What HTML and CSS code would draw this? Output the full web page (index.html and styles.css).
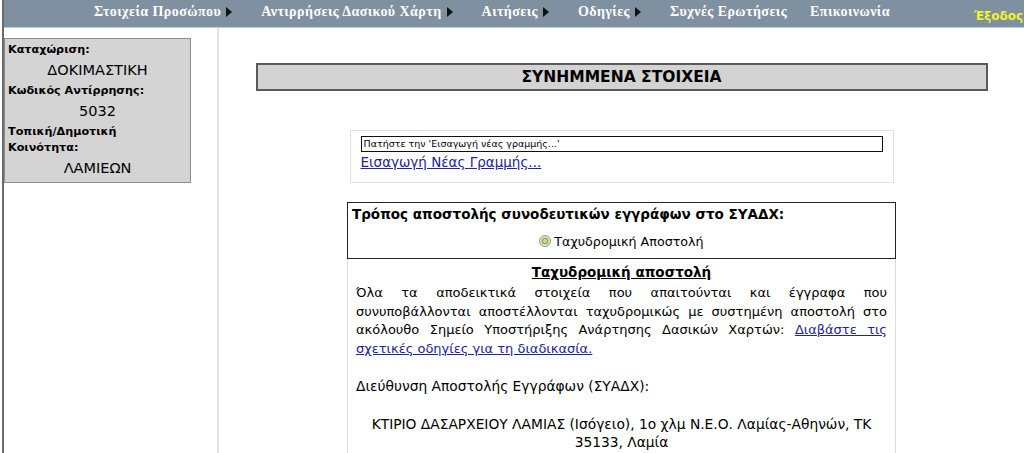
FILE: index.html
```html
<!DOCTYPE html>
<html lang="el">
<head>
<meta charset="utf-8">
<title>Συνημμένα Στοιχεία</title>
<link rel="stylesheet" href="styles.css">
</head>
<body>
<div class="page">
  <nav class="topnav">
    <a class="nav-item" href="#">Στοιχεία Προσώπου<span class="arrow"></span></a>
    <a class="nav-item" href="#">Αντιρρήσεις Δασικού Χάρτη<span class="arrow"></span></a>
    <a class="nav-item" href="#">Αιτήσεις<span class="arrow"></span></a>
    <a class="nav-item" href="#">Οδηγίες<span class="arrow"></span></a>
    <a class="nav-item" href="#">Συχνές Ερωτήσεις</a>
    <a class="nav-item" href="#">Επικοινωνία</a>
    <a class="nav-exit" href="#">Έξοδος</a>
  </nav>
  <div class="layout">
    <aside class="sidebar">
      <div class="infobox">
        <div class="info-label">Καταχώριση:</div>
        <div class="info-value">ΔΟΚΙΜΑΣΤΙΚΗ</div>
        <div class="info-label">Κωδικός Αντίρρησης:</div>
        <div class="info-value">5032</div>
        <div class="info-label">Τοπική/Δημοτική Κοινότητα:</div>
        <div class="info-value">ΛΑΜΙΕΩΝ</div>
      </div>
    </aside>
    <main class="main">
      <div class="title-box">ΣΥΝΗΜΜΕΝΑ ΣΤΟΙΧΕΙΑ</div>
      <div class="lines-box">
        <div class="hint-field">Πατήστε την 'Εισαγωγή νέας γραμμής...'</div>
        <a class="add-link" href="#">Εισαγωγή Νέας Γραμμής...</a>
      </div>
      <div class="method-box">
        <div class="method-title">Τρόπος αποστολής συνοδευτικών εγγράφων στο ΣΥΑΔΧ:</div>
        <div class="method-option">
          <svg class="radio" width="12" height="12" viewBox="0 0 12 12" aria-hidden="true">
            <circle cx="6" cy="6" r="5.5" fill="#e4ebdc" stroke="#8d9a86"/>
            <circle cx="6" cy="6" r="3.6" fill="#8fb25c"/>
            <circle cx="6" cy="6" r="2" fill="#c9dca8"/>
          </svg>Ταχυδρομική Αποστολή
        </div>
      </div>
      <div class="post-box">
        <div class="post-title">Ταχυδρομική αποστολή</div>
        <p class="post-text">Όλα τα αποδεικτικά στοιχεία που απαιτούνται και έγγραφα που συνυποβάλλονται αποστέλλονται ταχυδρομικώς με συστημένη αποστολή στο ακόλουθο Σημείο Υποστήριξης Ανάρτησης Δασικών Χαρτών: <a class="doc-link" href="#">Διαβάστε τις σχετικές οδηγίες για τη διαδικασία.</a></p>
        <p class="post-label">Διεύθυνση Αποστολής Εγγράφων (ΣΥΑΔΧ):</p>
        <p class="post-address">ΚΤΙΡΙΟ ΔΑΣΑΡΧΕΙΟΥ ΛΑΜΙΑΣ (Ισόγειο), 1ο χλμ Ν.Ε.Ο. Λαμίας-Αθηνών, ΤΚ 35133, Λαμία</p>
      </div>
    </main>
  </div>
</div>
</body>
</html>
```
FILE: styles.css
```css
html, body {
  margin: 0;
  padding: 0;
  background: #ffffff;
}
body {
  font-family: "DejaVu Sans", Verdana, sans-serif;
  color: #000;
  overflow: hidden;
}
.page {
  margin-left: 2px;
  border-left: 2px solid #6a6a6a;
  min-height: 453px;
}
.topnav {
  height: 27px;
  background: #7f90a0;
  display: flex;
  align-items: flex-start;
  padding-left: 90px;
  white-space: nowrap;
  border-bottom: 1px solid #c4ccd4;
}
.nav-item {
  font-family: "Liberation Serif", "Times New Roman", serif;
  font-weight: bold;
  font-size: 14px;
  letter-spacing: 0.45px;
  color: #ffffff;
  text-decoration: none;
  line-height: 24px;
  margin-right: 23px;
}
.arrow {
  display: inline-block;
  width: 0;
  height: 0;
  border-left: 6px solid #111;
  border-top: 5px solid transparent;
  border-bottom: 5px solid transparent;
  margin-left: 5px;
  margin-right: 6px;
  vertical-align: -1px;
}
.nav-exit {
  font-family: "DejaVu Sans", Verdana, sans-serif;
  font-weight: bold;
  font-size: 12px;
  color: #f4f428;
  text-decoration: none;
  line-height: 32px;
  margin-left: 61px;
}
.layout {
  display: flex;
  min-height: 425px;
}
.sidebar {
  width: 213px;
  flex: none;
  border-right: 2px solid #e4e4e4;
  padding-top: 10px;
}
.infobox {
  width: 185px;
  background: #d4d4d4;
  border: 1px solid #8e8e8e;
  padding: 3px 0 1px 0;
}
.info-label {
  font-weight: bold;
  font-size: 11.2px;
  line-height: 16px;
  padding-left: 3px;
}
.info-value {
  font-size: 14.5px;
  line-height: 25px;
  text-align: center;
}
.main {
  flex: 1;
  display: flex;
  flex-direction: column;
  align-items: center;
  padding-top: 35px;
}
.title-box {
  width: 728px;
  height: 24px;
  background: #d3d3d3;
  border: 2px solid #5a5a5a;
  font-weight: bold;
  font-size: 15.5px;
  line-height: 24px;
  text-align: center;
}
.lines-box {
  width: 522px;
  margin-top: 39px;
  border: 1px solid #e2e2e2;
  padding: 5px 10px 11px 10px;
}
.hint-field {
  height: 14px;
  border: 1px solid #111;
  font-size: 9.5px;
  line-height: 14px;
  padding-left: 2px;
  white-space: nowrap;
}
.add-link {
  display: inline-block;
  font-size: 13.5px;
  line-height: 18px;
  color: #23239c;
  text-decoration: underline;
}
.method-box {
  width: 539px;
  margin-top: 19px;
  border: 1px solid #222;
  padding: 1px 4px 7px 4px;
}
.method-title {
  font-weight: bold;
  font-size: 13.5px;
  line-height: 20px;
}
.method-option {
  margin-top: 9px;
  text-align: center;
  font-size: 12.7px;
  line-height: 18px;
}
.radio {
  vertical-align: -1px;
  margin-right: 3px;
}
.post-box {
  width: 531px;
  border: 1px solid #dcdcdc;
  border-top: none;
  padding: 4px 8px 0 8px;
  min-height: 200px;
}
.post-title {
  font-weight: bold;
  font-size: 13.5px;
  line-height: 19px;
  text-align: center;
  text-decoration: underline;
  margin-bottom: 2px;
}
.post-text {
  margin: 0 0 18.6px 0;
  font-size: 13px;
  line-height: 18.7px;
  text-align: justify;
}
.post-label {
  margin: 1px 0 18.6px 0;
  font-size: 13.8px;
  line-height: 18.6px;
}
.post-address {
  margin: 0;
  font-size: 13.8px;
  line-height: 18.6px;
  text-align: center;
}
.doc-link {
  color: #23239c;
}
```
